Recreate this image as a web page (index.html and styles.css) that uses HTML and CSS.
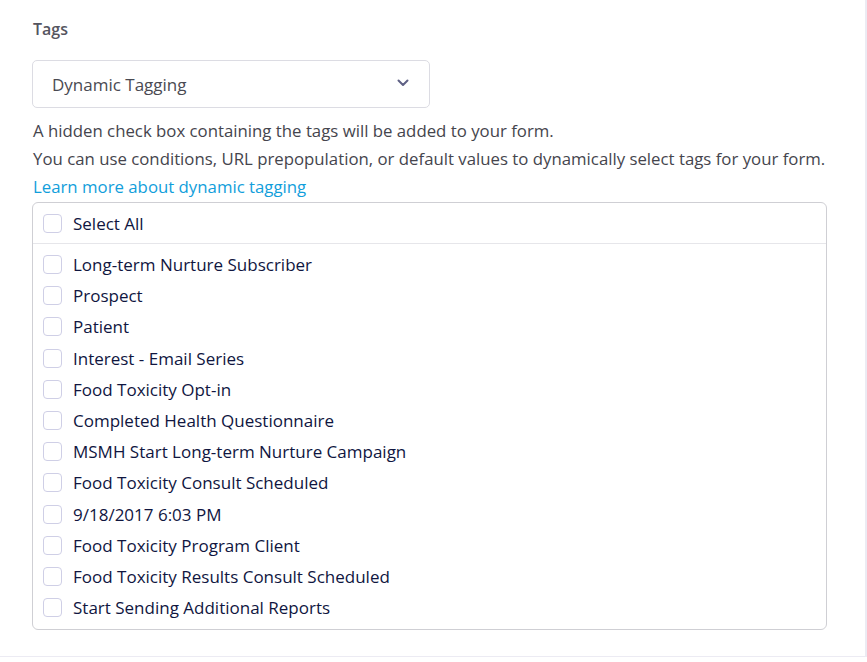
FILE: index.html
```html
<!DOCTYPE html>
<html lang="en">
<head>
  <meta charset="UTF-8">
  <title>Tags</title>
  <link rel="stylesheet" href="styles.css">
</head>
<body>
  <div class="panel">
    <div class="field-label">Tags</div>

    <div class="select">
      <span>Dynamic Tagging</span>
      <svg class="chevron" width="12" height="8" viewBox="0 0 12 8">
        <path d="M1.5 1.5 L6 6 L10.5 1.5" fill="none" stroke="#5f6185" stroke-width="2" stroke-linecap="round" stroke-linejoin="round"/>
      </svg>
    </div>

    <p class="help">A hidden check box containing the tags will be added to your form.</p>
    <p class="help">You can use conditions, URL prepopulation, or default values to dynamically select tags for your form.</p>
    <a class="learn" href="#">Learn more about dynamic tagging</a>

    <div class="tag-list">
      <label class="row head"><span class="box"></span>Select All</label>
      <div class="items">
        <label class="row"><span class="box"></span>Long-term Nurture Subscriber</label>
        <label class="row"><span class="box"></span>Prospect</label>
        <label class="row"><span class="box"></span>Patient</label>
        <label class="row"><span class="box"></span>Interest - Email Series</label>
        <label class="row"><span class="box"></span>Food Toxicity Opt-in</label>
        <label class="row"><span class="box"></span>Completed Health Questionnaire</label>
        <label class="row"><span class="box"></span>MSMH Start Long-term Nurture Campaign</label>
        <label class="row"><span class="box"></span>Food Toxicity Consult Scheduled</label>
        <label class="row"><span class="box"></span>9/18/2017 6:03 PM</label>
        <label class="row"><span class="box"></span>Food Toxicity Program Client</label>
        <label class="row"><span class="box"></span>Food Toxicity Results Consult Scheduled</label>
        <label class="row"><span class="box"></span>Start Sending Additional Reports</label>
      </div>
    </div>
  </div>
</body>
</html>
```
FILE: styles.css
```css
body {
  margin: 0;
  background: #ffffff;
  font-family: 'Open Sans', 'Noto Sans', sans-serif;
  font-size: 17px;
}

.panel {
  width: 867px;
  height: 657px;
  box-sizing: border-box;
  padding: 19px 38px 0 32px;
  border-right: 2px solid #ecebf3;
  border-bottom: 1px solid #ecebf3;
}

.field-label {
  color: #55555f;
  font-weight: 600;
  font-size: 16px;
  line-height: 20px;
  margin-left: 1px;
}

.select {
  margin-top: 21px;
  width: 398px;
  height: 48px;
  box-sizing: border-box;
  border: 1px solid #dcdce3;
  border-radius: 5px;
  display: flex;
  align-items: center;
  justify-content: space-between;
  padding: 0 20px 0 19px;
  color: #4a4a52;
  font-size: 17px;
}

.chevron {
  margin-top: -3px;
}

.help {
  margin: 0;
  color: #45454d;
  line-height: 28px;
  font-size: 16.8px;
  white-space: nowrap;
  margin-left: 1px;
}

.select + .help {
  margin-top: 9px;
}

.learn {
  display: block;
  color: #119edb;
  font-size: 16.8px;
  text-decoration: none;
  line-height: 28px;
  margin-left: 1px;
}

.tag-list {
  margin-top: 1px;
  border: 1px solid #cfcfd4;
  border-radius: 6px;
  padding-bottom: 6px;
}

.row {
  display: flex;
  align-items: center;
  height: 31.2px;
  padding-left: 10px;
  color: #10163f;
  font-size: 17px;
}

.row.head {
  height: 40px;
  border-bottom: 1px solid #e6e6ea;
}

.items {
  padding-top: 5px;
}

.box {
  width: 17px;
  height: 17px;
  border: 1.5px solid #cfcfe6;
  border-radius: 4px;
  margin-right: 11px;
  flex: none;
}
```
